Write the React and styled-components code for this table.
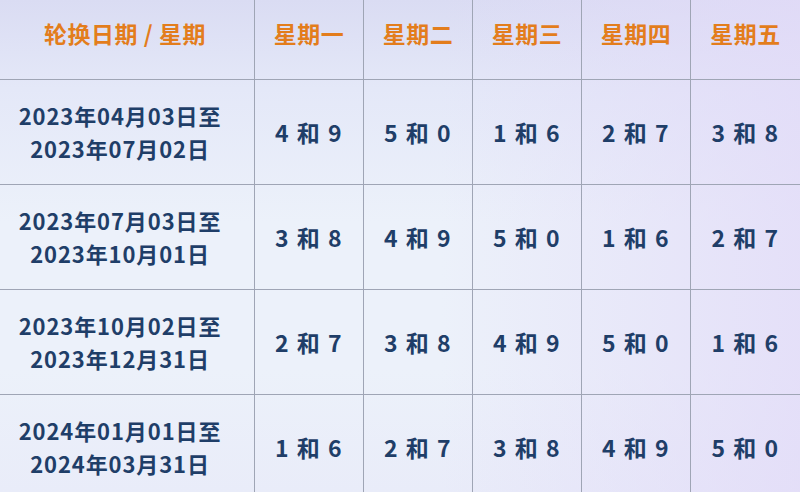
import React from 'react'
import styled, { createGlobalStyle } from 'styled-components';

const GlobalStyle = createGlobalStyle`
    html, body {
        margin: 0;
        padding: 0;
        width: 800px;
        height: 492px;
        overflow: hidden;
    }
`;

const Page = styled.div`
    width: 800px;
    height: 492px;
    overflow: hidden;
    background:
        linear-gradient(90deg, rgba(226,218,248,0) 55%, rgba(226,218,248,0.75) 100%),
        linear-gradient(180deg, #dadcf3 0%, #e4e8f8 18%, #ecf1fa 45%, #ecf1fa 75%, #e9ecf9 100%);
    font-family: 'Noto Sans CJK SC', 'Noto Sans', sans-serif;
`;

const Grid = styled.div`
    display: grid;
    grid-template-columns: 255px repeat(5, 1fr);
    grid-template-rows: 80px repeat(4, 105px);
`;

const Cell = styled.div`
    display: flex;
    flex-direction: column;
    align-items: center;
    justify-content: center;
    border-right: ${props => props.isLast ? 'none' : '1px solid #9fa5b5'};
    border-bottom: 1px solid #9fa5b5;
    padding-right: ${props => props.isDate ? (props.isHeader ? '4px' : '14px') : '0'};
    padding-bottom: ${props => props.isHeader ? '13px' : '0'};
`;

const HeaderText = styled.span`
    color: #e37d1c;
    font-size: 23px;
    font-weight: 700;
    letter-spacing: 0.5px;
`;

const DateText = styled.span`
    color: #1f3e68;
    font-size: 22px;
    font-weight: 700;
    line-height: 33px;
    letter-spacing: 0.9px;
    white-space: nowrap;
`;

const PairText = styled.span`
    color: #1f3e68;
    font-size: 23px;
    font-weight: 700;
    letter-spacing: 1.5px;
    white-space: pre;
`;

const days = ['星期一', '星期二', '星期三', '星期四', '星期五'];

const rows = [
    { from: '2023年04月03日至', to: '2023年07月02日', pairs: ['4和9', '5和0', '1和6', '2和7', '3和8'] },
    { from: '2023年07月03日至', to: '2023年10月01日', pairs: ['3和8', '4和9', '5和0', '1和6', '2和7'] },
    { from: '2023年10月02日至', to: '2023年12月31日', pairs: ['2和7', '3和8', '4和9', '5和0', '1和6'] },
    { from: '2024年01月01日至', to: '2024年03月31日', pairs: ['1和6', '2和7', '3和8', '4和9', '5和0'] },
];

const App = () => (
    <>
        <GlobalStyle />
        <Page>
            <Grid>
                <Cell isHeader isDate>
                    <HeaderText>轮换日期 / 星期</HeaderText>
                </Cell>
                {days.map((d, i) => (
                    <Cell isHeader key={d} isLast={i === days.length - 1}>
                        <HeaderText>{d}</HeaderText>
                    </Cell>
                ))}
                {rows.map(row => (
                    <React.Fragment key={row.from}>
                        <Cell isDate>
                            <DateText>{row.from}</DateText>
                            <DateText>{row.to}</DateText>
                        </Cell>
                        {row.pairs.map((p, i) => (
                            <Cell key={i} isLast={i === row.pairs.length - 1}>
                                <PairText>{p.split('和').join(' 和 ')}</PairText>
                            </Cell>
                        ))}
                    </React.Fragment>
                ))}
            </Grid>
        </Page>
    </>
);

export default App;
